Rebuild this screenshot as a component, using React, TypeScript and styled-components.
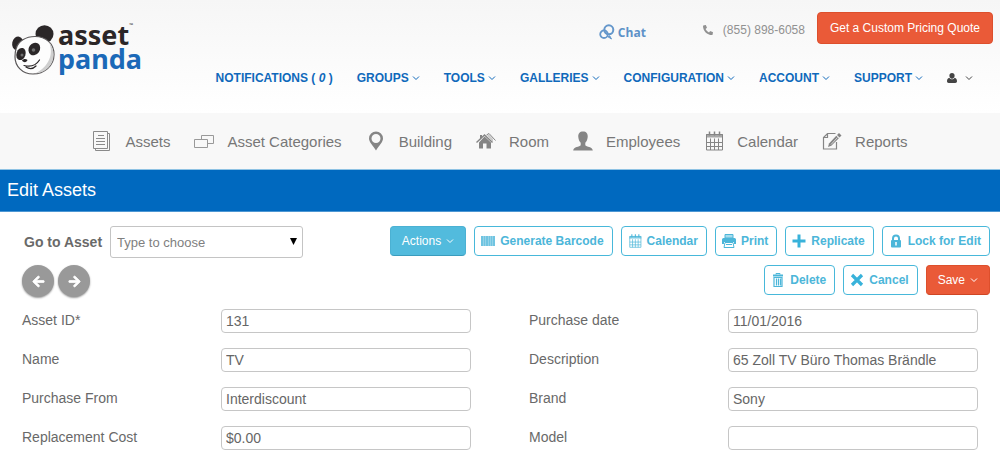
import React from "react";
import styled, { createGlobalStyle, css } from "styled-components";
import { FaArrowLeft, FaArrowRight, FaPhoneAlt } from "react-icons/fa";

const GlobalStyle = createGlobalStyle`
  * { box-sizing: border-box; }
  body {
    margin: 0;
    background: #fff;
    color: #696969;
    font-family: "Liberation Sans", Arial, Helvetica, sans-serif;
    font-size: 14px;
  }
  a { color: inherit; text-decoration: none; }
  button, input, select { font-family: inherit; margin: 0; }
  svg { display: block; flex: none; }
`;

const Header = styled.header`
  display: flex;
  justify-content: space-between;
  align-items: flex-start;
  height: 113px;
  padding: 12px 7px 0 10px;
  background: linear-gradient(#f6f6f6, #ffffff);
`;

const Logo = styled.a`
  display: flex;
  gap: 2px;
  padding-top: 11px;
`;

const Wordmark = styled.span`
  display: flex;
  flex-direction: column;
  font: 700 27px/24px "Noto Sans", "Open Sans", sans-serif;
  color: #2b2627;
`;

const WordTop = styled.span`
  display: flex;
  align-items: flex-start;
`;

const Trademark = styled.span`
  font-size: 5px;
  line-height: 5px;
  font-weight: 400;
`;

const WordBottom = styled.span`
  color: #1b69b8;
`;

const HeaderRight = styled.div`
  display: flex;
  flex-direction: column;
  align-items: flex-end;
  gap: 25px;
`;

const ContactRow = styled.div`
  display: flex;
  align-items: center;
`;

const ChatLink = styled.a`
  display: flex;
  align-items: center;
  gap: 3px;
  margin-right: 57px;
  padding-top: 9px;
  color: #5d92c8;
  font: 700 12px/16px "Open Sans", "Noto Sans", sans-serif;
`;

const Phone = styled.a`
  display: flex;
  align-items: center;
  gap: 10px;
  margin-right: 12px;
  padding-top: 4px;
  color: #919191;
  font-size: 12px;
`;

const QuoteButton = styled.button`
  height: 32px;
  padding: 0 12px;
  border: 1px solid #dd4f2c;
  border-radius: 4px;
  background: #ea5a38;
  color: #fff;
  font-size: 12px;
`;

const MainNav = styled.nav`
  display: flex;
  gap: 24px;
  padding-right: 20px;
`;

const NavLink = styled.a<{ $dark?: boolean }>`
  display: flex;
  align-items: center;
  gap: ${(p) => (p.$dark ? "8px" : "3px")};
  height: 18px;
  color: ${(p) => (p.$dark ? "#444" : "#0f69bb")};
  font-size: 12px;
  font-weight: 700;
  white-space: pre;
`;

const ModuleNav = styled.nav`
  display: flex;
  justify-content: center;
  gap: 24px;
  height: 57px;
  background: #f8f8f8;
  border-bottom: 1px solid #8fc3e4;
`;

const ModuleLink = styled.a`
  display: flex;
  align-items: center;
  gap: 13px;
  color: #777;
  font-size: 15px;
  white-space: nowrap;
`;

const PageTitle = styled.h1`
  margin: 0;
  padding: 0 7px;
  background: #0069bf;
  border-bottom: 1px solid #4d97d3;
  color: #fff;
  font-size: 18px;
  font-weight: 400;
  line-height: 41px;
`;

const Toolbar = styled.section`
  display: flex;
  justify-content: space-between;
  align-items: flex-start;
  padding: 14px 10px 12px 22px;
`;

const Finder = styled.div`
  display: flex;
  flex-direction: column;
  gap: 7px;
`;

const FinderRow = styled.div`
  display: flex;
  align-items: center;
  gap: 8px;
  padding-left: 2px;
`;

const FinderLabel = styled.label`
  font-weight: 700;
`;

const SelectWrap = styled.span`
  position: relative;
  display: block;
  width: 193px;
`;

const Select = styled.select`
  display: block;
  width: 100%;
  height: 32px;
  padding: 0 6px;
  appearance: none;
  border: 1px solid #c4c4c4;
  border-radius: 3px;
  background: #fff;
  color: #808080;
  font-size: 13px;
`;

const SelectArrow = styled.svg`
  position: absolute;
  right: 6px;
  top: 12px;
  pointer-events: none;
`;

const PagerRow = styled.div`
  display: flex;
  gap: 4px;
`;

const RoundButton = styled.button`
  display: grid;
  place-items: center;
  width: 32px;
  height: 32px;
  padding: 0;
  border: 0;
  border-radius: 50%;
  background: #999;
  color: #fff;
  box-shadow: 0 1px 2px rgba(0, 0, 0, 0.4);
`;

const Actions = styled.div`
  display: flex;
  flex-direction: column;
  gap: 9px;
`;

const ActionRow = styled.div`
  display: flex;
  justify-content: flex-end;
  gap: 8px;
`;

const filled = {
  info: css`
    padding: 0 11px;
    background: #52bbdd;
    border-color: #4bb1d3 #4bb1d3 #3a9cbd;
    color: #fff;
  `,
  danger: css`
    padding: 0 11px;
    background: #ea5a38;
    border-color: #dd4f2c #dd4f2c #cf4624;
    color: #fff;
  `,
};

const ActionButton = styled.button<{ $fill?: "info" | "danger" }>`
  display: flex;
  align-items: center;
  gap: 5px;
  height: 30px;
  padding: 0 8px 0 6px;
  border: 1px solid #48b8da;
  border-radius: 4px;
  background: #fff;
  color: #4cb6d9;
  font-size: 12px;
  font-weight: 700;
  white-space: nowrap;
  ${(p) => p.$fill && filled[p.$fill]}
`;

const PlainText = styled.span`
  font-weight: 400;
`;

const Form = styled.form`
  display: grid;
  grid-template-columns: 1fr 1fr;
  gap: 15px 58px;
  padding: 0 22px 14px;
`;

const Field = styled.div`
  display: grid;
  grid-template-columns: 199px 1fr;
  align-items: center;
`;

const FieldLabel = styled.label`
  line-height: 22px;
  padding-bottom: 2px;
`;

const FieldInput = styled.input`
  width: 100%;
  height: 24px;
  padding: 0 4px;
  border: 1px solid #c6c6c6;
  border-radius: 4px;
  background: #fff;
  color: #666;
  font-size: 14px;
`;

const Chevron = () => (
  <svg width="8" height="6" viewBox="0 0 8 6" fill="none" stroke="currentColor" strokeWidth="1">
    <path d="M1 1.5 4 4.5 7 1.5" />
  </svg>
);

const PandaMark = () => (
  <svg width="46" height="52" viewBox="0 0 46 52">
    <ellipse cx="7.700" cy="20.500" rx="5.500" ry="7" fill="#2b2728" transform="rotate(12 7.700 20.500)" />
    <ellipse cx="34.500" cy="11" rx="9" ry="8.800" fill="#2b2728" />
    <path
      d="M6 26C8 18 16 13.500 25 13.500c11 0 19 7 19 18C44 43 34 51 23 51 12 51 5 43 5 34c0-3 .2-5.500 1-8Z"
      fill="#fdfdfd"
      stroke="#5a5758"
      strokeWidth="1.200"
    />
    <path d="M39 19c5 12 0 25-14 31.500C36 50 43.500 42 43.500 32c0-5-1.500-9.500-4.500-13Z" fill="#cfcfcf" />
    <ellipse cx="11" cy="31" rx="4.500" ry="6.200" fill="#2b2728" transform="rotate(18 11 31)" />
    <ellipse cx="24.300" cy="26" rx="5.500" ry="6.600" fill="#2b2728" transform="rotate(35 24.300 26)" />
    <circle cx="12" cy="32" r="1.500" fill="#6f6f6f" />
    <circle cx="23.500" cy="27" r="1.800" fill="#6f6f6f" />
    <path d="M12 37.500c1.500-2 4-2 5.500-.5-.5 2-3.500 3.500-5.500.5Z" fill="#2b2728" />
    <path d="M14 42.500c6 1.500 12 0 15.500-5.500M16 44c3 2 7 2 10-1" fill="none" stroke="#2b2728" strokeWidth="1.200" strokeLinecap="round" />
  </svg>
);

const ChatIcon = () => (
  <svg width="16" height="17" viewBox="0 0 16 17" fill="none" stroke="#6597cb">
    <circle cx="9.800" cy="5.800" r="4.500" strokeWidth="2" />
    <circle cx="5" cy="10.200" r="3.800" strokeWidth="1.800" />
    <path d="m10.500 11.500 2 3.500-4-2.500" fill="#6597cb" strokeWidth="1" />
  </svg>
);

const UserIcon = () => (
  <svg width="10" height="10" viewBox="0 0 10 10" fill="currentColor">
    <path d="M5 0a2.600 2.600 0 0 1 2.600 2.700C7.600 4.300 6.500 5.700 5 5.700S2.400 4.300 2.400 2.700A2.600 2.600 0 0 1 5 0Z" />
    <path d="M2.400 4.700C3.100 5.800 4 6.200 5 6.200s1.900-.4 2.600-1.500C9.300 4.900 10 6.500 10 8.300 10 9.400 9.300 10 8.300 10H1.700C.7 10 0 9.400 0 8.300c0-1.800.7-3.400 2.400-3.600Z" />
  </svg>
);

const AssetsIcon = () => (
  <svg width="20" height="20" viewBox="0 0 20 20" fill="none" stroke="#8a8a8a">
    <path d="M16 2.500h1.500v17h-14V18" />
    <path d="M1.500.500h14v17h-14Z" />
    <path d="M6 4.500h6M4 7.500h9M4 10.500h9M4 13.500h9" strokeWidth="1.200" />
  </svg>
);

const CategoriesIcon = () => (
  <svg width="20" height="14" viewBox="0 0 20 14" fill="none" stroke="#999">
    <path d="M7.500 5V1.500h12v8H14" />
    <path d="M.500 5.500h13v8H.500Z" />
  </svg>
);

const PinIcon = () => (
  <svg width="20" height="20" viewBox="0 0 20 20" fill="#858585">
    <path fillRule="evenodd" d="M10 .500a7 7 0 0 1 7 7c0 3.500-3.500 6.500-7 12-3.500-5.500-7-8.500-7-12a7 7 0 0 1 7-7Zm0 2.500a4.500 4.500 0 1 0 0 9 4.500 4.500 0 0 0 0-9Z" />
  </svg>
);

const HomeIcon = () => (
  <svg width="20" height="16" viewBox="0 0 20 16" fill="#858585">
    <path d="m8.500 3.500 6.500 6v6h-4.500v-5h-3.500v5H3V9.500l5.500-6Z" />
    <path d="M.500 9.500 8.500 2l8 7.500" fill="none" stroke="#858585" strokeWidth="1.400" />
    <path d="m10.500 2 2.500-1.500L19.500 7.500" fill="none" stroke="#858585" />
    <path d="M4 2h2v2.500L4 6.500Z" />
    <path d="m11 2.500 2-1 4 4.500v3Z" opacity=".4" />
  </svg>
);

const PersonIcon = () => (
  <svg width="20" height="20" viewBox="0 0 20 20" fill="#858585">
    <path d="M10 .500c3.200 0 5 2 4.700 5.500-.2 2.500-1.200 4.600-2.400 5.800v2.400c1 1.600 7.200 1.500 7.500 5.300H.200c.3-3.800 6.500-3.700 7.500-5.300v-2.400C6.500 10.600 5.500 8.500 5.300 6 5 2.500 6.800.500 10 .500Z" />
  </svg>
);

const CalendarGlyph = ({ size, color }: { size: number; color: string }) => (
  <svg width={size} height={size} viewBox="0 0 20 20" fill="none" stroke={color}>
    <path d="M2.500 3.500h16v15.500h-16ZM2.500 11.500h16M2.500 15.500h16M6.500 7.500V19M10.500 7.500V19M14.500 7.500V19" />
    <path d="M2 3h17v3.500H2Z" fill={color} stroke="none" opacity=".7" />
    <path d="M5.500.500v4M10.500.500v4M15.500.500v4" strokeWidth="1.500" />
  </svg>
);

const ReportsIcon = () => (
  <svg width="20" height="18" viewBox="0 0 20 18" fill="none" stroke="#858585" strokeWidth="1.200">
    <path d="M14.500 10v7h-13V5.500l4-4h8M5.500 1.500v4h-4" />
    <path d="M17 1 19.500 3.500 17.500 5.500 15 3Z" fill="#858585" stroke="none" />
    <path d="m14.300 3.700 2.500 2.500-7.500 7.500L6 15l1-3.600Z" fill="#858585" stroke="none" />
    <path d="m9 12.500 6.500-7" stroke="#f8f8f8" strokeWidth=".7" />
  </svg>
);

const BarcodeIcon = () => (
  <svg width="14" height="10" viewBox="0 0 14 10" fill="#4cb6d9">
    <path d="M0 0h14v10H0Z" opacity=".6" />
    <path d="M0 0h2v10H0ZM3 0h1v10H3ZM5 0h2v10H5ZM8 0h1v10H8ZM10 0h1v10h-1ZM12 0h2v10h-2Z" opacity=".5" />
  </svg>
);

const PrintIcon = () => (
  <svg width="14" height="14" viewBox="0 0 14 14">
    <path d="M3 .500h8V4H3Z" fill="#a5dced" stroke="#4cb6d9" />
    <path d="M1.500 4h11A1.500 1.500 0 0 1 14 5.500V10h-2V8H2v2H0V5.500A1.500 1.500 0 0 1 1.500 4Z" fill="#4cb6d9" />
    <path d="M3 8.500h8l1 5H2Z" fill="#fff" stroke="#4cb6d9" />
    <path d="M4 10.500h6" stroke="#4cb6d9" />
  </svg>
);

const PlusIcon = () => (
  <svg width="14" height="14" viewBox="0 0 14 14" stroke="#38b2da" strokeWidth="3">
    <path d="M7 .500v13M.500 7h13" />
  </svg>
);

const LockIcon = () => (
  <svg width="14" height="14" viewBox="0 0 14 14" fill="none">
    <path d="M4 7V4.500a3 3 0 0 1 6 0V7" stroke="#4cb6d9" strokeWidth="2" />
    <rect x="2" y="6" width="10" height="7.500" rx="1" fill="#4cb6d9" />
    <path d="M7 8v3.500" stroke="#fff" strokeWidth="1.500" />
  </svg>
);

const TrashIcon = () => (
  <svg width="14" height="14" viewBox="0 0 14 14" fill="none" stroke="#4cb6d9">
    <path d="M5 1.500V.500h4v1" />
    <path d="M2 2.500h10" strokeWidth="2" />
    <path d="M3 4.500h8v9H3ZM5.500 5.500v7M7.500 5.500v7M9.500 5.500v7" strokeWidth="1.200" />
  </svg>
);

const CrossIcon = () => (
  <svg width="14" height="14" viewBox="0 0 14 14" stroke="#38b2da" strokeWidth="3.200">
    <path d="m2 2 10 10M12 2 2 12" />
  </svg>
);

const menus = ["GROUPS", "TOOLS", "GALLERIES", "CONFIGURATION", "ACCOUNT", "SUPPORT"];

const modules = [
  { label: "Assets", icon: <AssetsIcon /> },
  { label: "Asset Categories", icon: <CategoriesIcon /> },
  { label: "Building", icon: <PinIcon /> },
  { label: "Room", icon: <HomeIcon /> },
  { label: "Employees", icon: <PersonIcon /> },
  { label: "Calendar", icon: <CalendarGlyph size={20} color="#858585" /> },
  { label: "Reports", icon: <ReportsIcon /> },
];

const primaryActions = [
  { label: "Generate Barcode", icon: <BarcodeIcon /> },
  { label: "Calendar", icon: <CalendarGlyph size={14} color="#4cb6d9" /> },
  { label: "Print", icon: <PrintIcon /> },
  { label: "Replicate", icon: <PlusIcon /> },
  { label: "Lock for Edit", icon: <LockIcon /> },
];

const secondaryActions = [
  { label: "Delete", icon: <TrashIcon /> },
  { label: "Cancel", icon: <CrossIcon /> },
];

const fields = [
  { id: "asset-id", label: "Asset ID*", value: "131" },
  { id: "purchase-date", label: "Purchase date", value: "11/01/2016" },
  { id: "name", label: "Name", value: "TV" },
  { id: "description", label: "Description", value: "65 Zoll TV Büro Thomas Brändle" },
  { id: "purchase-from", label: "Purchase From", value: "Interdiscount" },
  { id: "brand", label: "Brand", value: "Sony" },
  { id: "replacement-cost", label: "Replacement Cost", value: "$0.00" },
  { id: "model", label: "Model", value: "" },
];

export default function App() {
  return (
    <>
      <GlobalStyle />
      <Header>
        <Logo href="#">
          <PandaMark />
          <Wordmark>
            <WordTop>
              asset<Trademark>™</Trademark>
            </WordTop>
            <WordBottom>panda</WordBottom>
          </Wordmark>
        </Logo>
        <HeaderRight>
          <ContactRow>
            <ChatLink href="#">
              <ChatIcon />
              Chat
            </ChatLink>
            <Phone href="tel:8558986058">
              <FaPhoneAlt size={10} />
              (855) 898-6058
            </Phone>
            <QuoteButton type="button">Get a Custom Pricing Quote</QuoteButton>
          </ContactRow>
          <MainNav>
            <NavLink href="#">
              <span>
                NOTIFICATIONS ( <em>0</em> )
              </span>
            </NavLink>
            {menus.map((label) => (
              <NavLink href="#" key={label}>
                {label}
                <Chevron />
              </NavLink>
            ))}
            <NavLink href="#" $dark aria-label="User">
              <UserIcon />
              <Chevron />
            </NavLink>
          </MainNav>
        </HeaderRight>
      </Header>

      <ModuleNav>
        {modules.map((m) => (
          <ModuleLink href="#" key={m.label}>
            {m.icon}
            {m.label}
          </ModuleLink>
        ))}
      </ModuleNav>

      <main>
        <PageTitle>Edit Assets</PageTitle>
        <Toolbar>
          <Finder>
            <FinderRow>
              <FinderLabel htmlFor="go-to-asset">Go to Asset</FinderLabel>
              <SelectWrap>
                <Select id="go-to-asset">
                  <option>Type to choose</option>
                </Select>
                <SelectArrow width="7" height="7" viewBox="0 0 7 7">
                  <path d="M0 0h7L3.500 7Z" fill="#000" />
                </SelectArrow>
              </SelectWrap>
            </FinderRow>
            <PagerRow>
              <RoundButton type="button" aria-label="Previous asset">
                <FaArrowLeft size={13} stroke="currentColor" strokeWidth={30} />
              </RoundButton>
              <RoundButton type="button" aria-label="Next asset">
                <FaArrowRight size={13} stroke="currentColor" strokeWidth={30} />
              </RoundButton>
            </PagerRow>
          </Finder>
          <Actions>
            <ActionRow>
              <ActionButton type="button" $fill="info">
                <PlainText>Actions</PlainText>
                <Chevron />
              </ActionButton>
              {primaryActions.map((a) => (
                <ActionButton type="button" key={a.label}>
                  {a.icon}
                  {a.label}
                </ActionButton>
              ))}
            </ActionRow>
            <ActionRow>
              {secondaryActions.map((a) => (
                <ActionButton type="button" key={a.label}>
                  {a.icon}
                  {a.label}
                </ActionButton>
              ))}
              <ActionButton type="button" $fill="danger">
                <PlainText>Save</PlainText>
                <Chevron />
              </ActionButton>
            </ActionRow>
          </Actions>
        </Toolbar>
        <Form>
          {fields.map((f) => (
            <Field key={f.id}>
              <FieldLabel htmlFor={f.id}>{f.label}</FieldLabel>
              <FieldInput id={f.id} defaultValue={f.value} />
            </Field>
          ))}
        </Form>
      </main>
    </>
  );
}
